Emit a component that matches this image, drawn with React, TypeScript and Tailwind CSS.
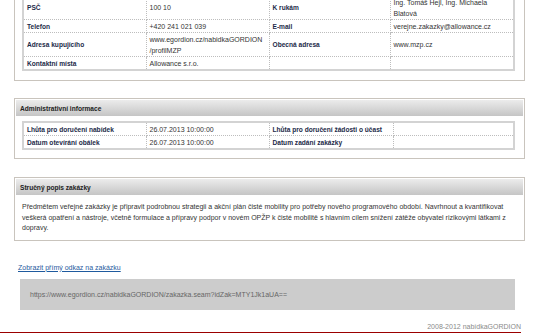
import React from 'react';

const label = "border border-dotted border-[#bdbdbd] px-[3px] py-[0.5px] font-bold text-[6.6px] text-[#1c2a48] align-middle";
const value = "border border-dotted border-[#bdbdbd] px-[3px] py-[0.5px] text-[#333333] align-middle";

const Panel = ({ title, children, className = '' }: { title: string; children: React.ReactNode; className?: string }) => (
  <div className={`ml-[14px] w-[511px] border border-[#c9c4bd] p-px ${className}`}>
    <div className="h-[16px] flex items-center pl-[4px] font-bold text-[6.6px] text-[#222222] bg-gradient-to-b from-[#ececec] to-[#c5c5c5]">
      {title}
    </div>
    {children}
  </div>
);

export default function App() {
  return (
    <div className="w-[547px] h-[333px] overflow-hidden bg-white font-['Liberation_Sans',Arial,sans-serif] text-[7px] leading-[11px]">
      <div className="-mt-[6px]">
        {/* kontaktni udaje (hlavicka je nad obrazem) */}
        <div className="ml-[14px] w-[511px] border-x border-b border-[#c9c4bd] pl-[7px] pb-[9px]">
          <table className="w-[493px] table-fixed border-collapse border-2 border-[#d3d3d3]">
            <colgroup>
              <col className="w-[123px]" />
              <col className="w-[123px]" />
              <col className="w-[121px]" />
              <col />
            </colgroup>
            <tbody>
              <tr>
                <td className={label}>PSČ</td>
                <td className={value}>100 10</td>
                <td className={label}>K rukám</td>
                <td className={value}>Ing. Tomáš Hejl, Ing. Michaela Blatová</td>
              </tr>
              <tr>
                <td className={label}>Telefon</td>
                <td className={value}>+420 241 021 039</td>
                <td className={label}>E-mail</td>
                <td className={value}>verejne.zakazky@allowance.cz</td>
              </tr>
              <tr>
                <td className={label}>Adresa kupujícího</td>
                <td className={value}>www.egordion.cz/nabidkaGORDION /profilMZP</td>
                <td className={label}>Obecná adresa</td>
                <td className={value}>www.mzp.cz</td>
              </tr>
              <tr>
                <td className={label}>Kontaktní místa</td>
                <td className={value}>Allowance s.r.o.</td>
                <td className={value}></td>
                <td className={value}></td>
              </tr>
            </tbody>
          </table>
        </div>

        <Panel title="Administrativní informace" className="mt-[17px]">
          <div className="pl-[6px] pt-[5px] pb-[7px]">
            <table className="w-[493px] table-fixed border-collapse border-2 border-[#d3d3d3]">
              <colgroup>
                <col className="w-[123px]" />
                <col className="w-[123px]" />
                <col className="w-[124px]" />
                <col />
              </colgroup>
              <tbody>
                <tr>
                  <td className={`${label} whitespace-nowrap`}>Lhůta pro doručení nabídek</td>
                  <td className={value}>26.07.2013 10:00:00</td>
                  <td className={`${label} whitespace-nowrap`}>Lhůta pro doručení žádosti o účast</td>
                  <td className={value}></td>
                </tr>
                <tr>
                  <td className={label}>Datum otevírání obálek</td>
                  <td className={value}>26.07.2013 10:00:00</td>
                  <td className={label}>Datum zadání zakázky</td>
                  <td className={value}></td>
                </tr>
              </tbody>
            </table>
          </div>
        </Panel>

        <Panel title="Stručný popis zakázky" className="mt-[18px]">
          <p className="pl-[6px] pr-[7px] pt-[7px] pb-[5px] leading-[10.5px] text-[#333333]">
            Předmětem veřejné zakázky je připravit podrobnou strategii a akční plán čisté mobility pro potřeby nového programového období. Navrhnout a kvantifikovat veškerá opatření a nástroje, včetně formulace a přípravy podpor v novém OPŽP k čisté mobilitě s hlavním cílem snížení zátěže obyvatel rizikovými látkami z dopravy.
          </p>
        </Panel>

        <div className="ml-[18px] mt-[21px]">
          <a href="#" className="text-[#1f5a9e] underline">Zobrazit přímý odkaz na zakázku</a>
        </div>

        <div className="ml-[20px] mt-[6px] w-[495px] h-[31px] bg-[#cccccc] flex items-center pl-[10px] text-[#666666]">
          https://www.egordion.cz/nabidkaGORDION/zakazka.seam?idZak=MTY1Jk1aUA==
        </div>

        <div className="w-[521px] mt-[12px] text-right text-[#8a8a8a] leading-[10px]">
          2008-2012 nabídkaGORDION
        </div>
        <div className="w-[521px] h-[3px] bg-[#9b0000]" />
      </div>
    </div>
  );
}
